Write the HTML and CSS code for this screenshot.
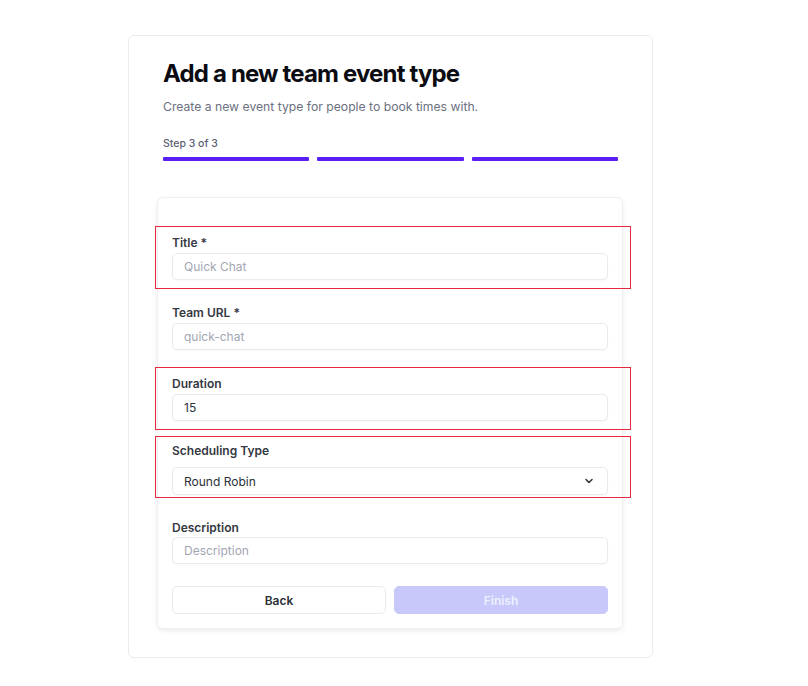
FILE: index.html
```html
<!DOCTYPE html>
<html lang="en">
<head>
  <meta charset="UTF-8" /><meta name="viewport" content="width=device-width, initial-scale=1.0" />
  <title>New team event type</title>
  <link rel="stylesheet" href="styles.css">
</head>
<body>
  <div class="wizard">
    <h1>Add a new team event type</h1>
    <p class="lead">Create a new event type for people to book times with.</p>
    <div class="step">Step 3 of 3</div>
    <div class="bars">
      <span></span><span></span><span></span>
    </div>

    <form class="panel" onsubmit="return false">
      <div class="field marked">
        <label for="title">Title *</label>
        <input type="text" id="title" placeholder="Quick Chat" />
      </div>
      <div class="field gap7">
        <label for="slug">Team URL *</label>
        <input type="text" id="slug" placeholder="quick-chat" />
      </div>
      <div class="field marked gap8">
        <label for="duration">Duration</label>
        <input type="text" id="duration" value="15" />
      </div>
      <div class="field marked gap6 sched">
        <label for="schedType">Scheduling Type</label>
        <div class="select">
          <span>Round Robin</span>
          <svg width="12" height="12" viewBox="0 0 24 24" fill="none" stroke="#333" stroke-width="3" stroke-linecap="round" stroke-linejoin="round"><path d="M6 9l6 6 6-6"/></svg>
        </div>
      </div>
      <div class="field desc">
        <label for="desc">Description</label>
        <input type="text" id="desc" placeholder="Description" />
      </div>
      <div class="actions">
        <button type="button" class="btn back">Back</button>
        <button type="submit" class="btn finish" disabled>Finish</button>
      </div>
    </form>
  </div>
</body>
</html>
```

FILE: styles.css
```css
body { margin: 0; background: #fff; font-family: Inter, "Liberation Sans", sans-serif; color: #111827; }

.wizard { width: 455px; margin: 35px 0 28px 128px; padding: 22px 34px 28px 34px; border: 1px solid #e9ebef; border-radius: 6px; }
h1 { margin: 0; font-size: 24px; line-height: 32px; font-weight: 700; letter-spacing: -0.035em; color: #0b0b12; }
.lead { margin: 8px 0 0; font-size: 12.2px; line-height: 18px; color: #6b7080; }
.step { margin-top: 21px; font-size: 10.5px; line-height: 14px; font-weight: 500; color: #5b6170; }
.bars { display: flex; gap: 8px; margin-top: 6px; }
.bars span { flex: 1; height: 4px; border-radius: 1px; background: #5b1ef3; }

.panel { margin: 36px -5px 0 -6px; padding: 28px 14px 14px 14px; border: 1px solid #eef0f3; border-radius: 6px; box-shadow: 0 2px 5px rgba(0,0,0,.08); }
.field { display: flex; flex-direction: column; margin: 0 -23px 0 -17px; padding: 9px 23px 9px 17px; }
.field.marked { outline: 1px solid #e8283c; outline-offset: -1px; }
.gap7 { margin-top: 7px; }
.gap8 { margin-top: 8px; }
.gap6 { margin-top: 6px; }
.field label { font-size: 12px; line-height: 15px; font-weight: 600; color: #343842; margin-bottom: 3px; }
.field input, .select { box-sizing: border-box; height: 27px; width: 100%; padding: 0 11px; border: 1px solid #e8eaee; border-radius: 5px; font: inherit; font-size: 12px; color: #2b2f38; background: #fff; box-shadow: 0 1px 2px rgba(0,0,0,.03); }
.field input::placeholder { color: #a2a6b2; }

.sched { padding-top: 7px; padding-bottom: 3px; }
.sched label { margin-bottom: 9px; }
.select { height: 28px; display: flex; align-items: center; justify-content: space-between; padding-right: 12px; }

.desc { margin-top: 13px; padding-bottom: 0; }
.desc label { margin-bottom: 2px; }

.actions { display: flex; gap: 8px; margin-top: 22px; }
.btn { flex: 1; height: 28px; border-radius: 5px; font: inherit; font-size: 12px; font-weight: 600; cursor: pointer; }
.back { background: #fff; border: 1px solid #e8eaee; color: #2b2f38; }
.finish { background: #c8c9fa; border: 1px solid #c8c9fa; color: #eef0ff; }
```
